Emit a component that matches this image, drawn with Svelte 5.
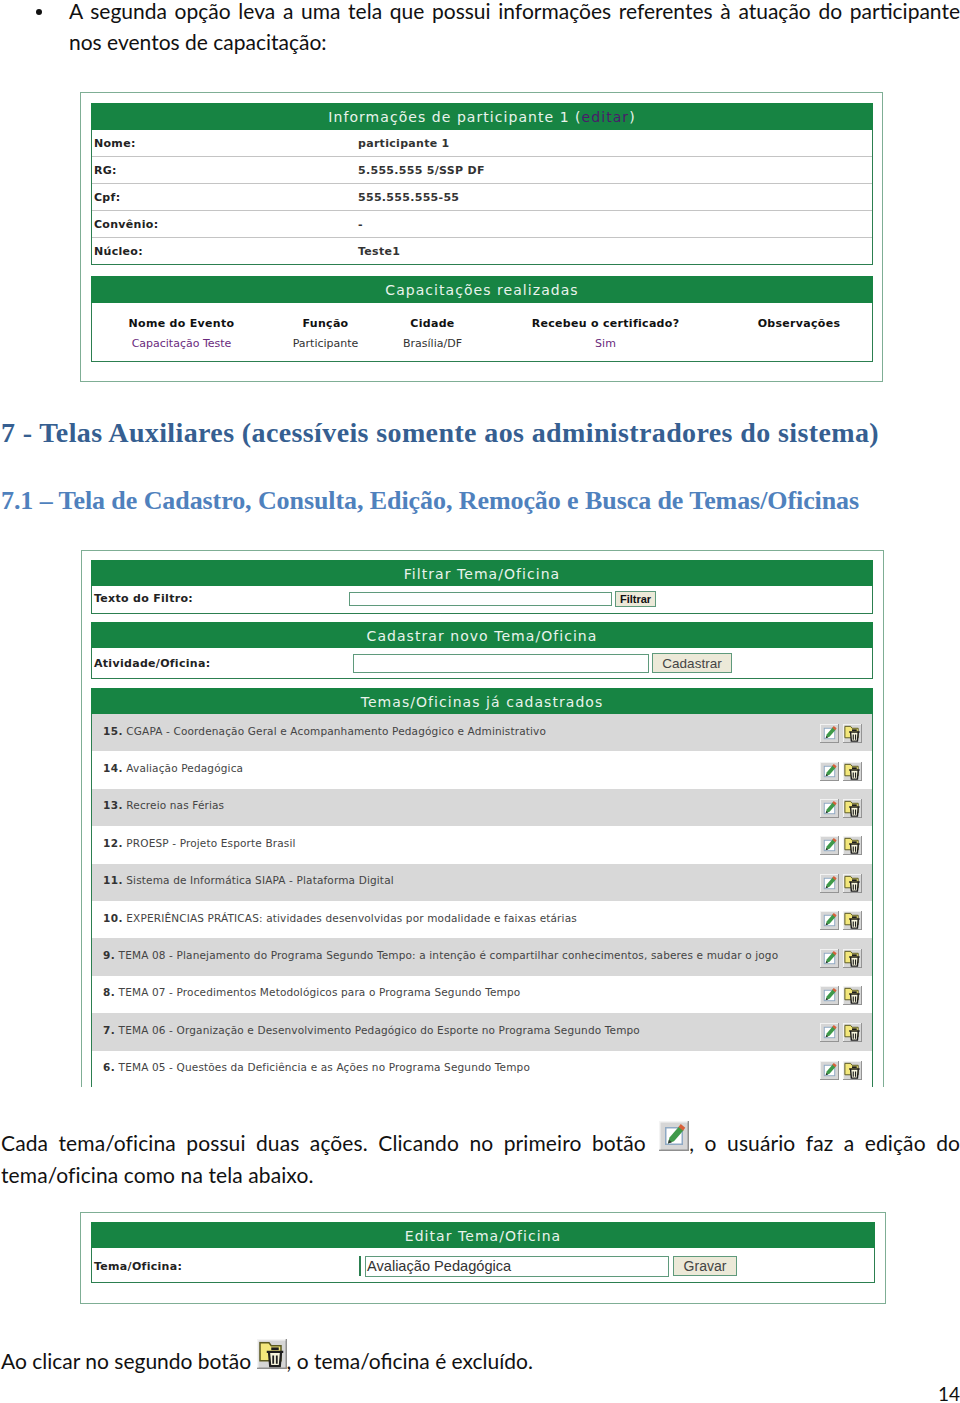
<script lang="ts">
const info = [
  ['Nome:', 'participante 1', true],
  ['RG:', '5.555.555 5/SSP DF', false],
  ['Cpf:', '555.555.555-55', false],
  ['Convênio:', '-', false],
  ['Núcleo:', 'Teste1', false]
];

const temas = [
  ['15.', 'CGAPA - Coordenação Geral e Acompanhamento Pedagógico e Administrativo'],
  ['14.', 'Avaliação Pedagógica'],
  ['13.', 'Recreio nas Férias'],
  ['12.', 'PROESP - Projeto Esporte Brasil'],
  ['11.', 'Sistema de Informática SIAPA - Plataforma Digital'],
  ['10.', 'EXPERIÊNCIAS PRÁTICAS: atividades desenvolvidas por modalidade e faixas etárias'],
  ['9.', 'TEMA 08 - Planejamento do Programa Segundo Tempo: a intenção é compartilhar conhecimentos, saberes e mudar o jogo'],
  ['8.', 'TEMA 07 - Procedimentos Metodológicos para o Programa Segundo Tempo'],
  ['7.', 'TEMA 06 - Organização e Desenvolvimento Pedagógico do Esporte no Programa Segundo Tempo'],
  ['6.', 'TEMA 05 - Questões da Deficiência e as Ações no Programa Segundo Tempo']
];
</script>

{#snippet editIcon()}
  <svg class="icon" viewBox="0 0 20 20">
    <rect width="20" height="20" fill="#d6d6d6" />
    <path d="M0 19.5H20M19.5 0V20" stroke="#8f8f8f" />
    <path d="M0 .5H19M.5 0V19" stroke="#f4f4f4" />
    <rect x="4.500" y="4.500" width="11" height="11" fill="#fff" stroke="#8fa9c4" />
    <path d="M6 15l1-4 6.500-7.500 3 2.500-6.500 7.500z" fill="#3f9a4a" />
    <path d="M13 4l1.500-2 3 2.500-1.500 2z" fill="#d8603a" />
    <path d="M6 15l.6-2.500 2 1.700z" fill="#333" />
  </svg>
{/snippet}

{#snippet trashIcon()}
  <svg class="icon" viewBox="0 0 20 20">
    <rect width="20" height="20" fill="#d6d6d6" />
    <path d="M0 19.500H20M19.500 0V20" stroke="#8f8f8f" />
    <path d="M0 .5H19M.5 0V19" stroke="#f4f4f4" />
    <path d="M2 14.500V2.500h6l1.500 2H16v10z" fill="#f3e77c" stroke="#5c5a20" />
    <path d="M6.500 8.500h11M8 9l.8 9h6.400l.8-9" fill="#f7f5dc" stroke="#1e1e1e" stroke-width="1.500" />
    <path d="M9.500 6.500h5" stroke="#1e1e1e" stroke-width="1.800" />
    <path d="M10.800 11v5.500M13.200 11v5.500" stroke="#1e1e1e" stroke-width="1.200" />
  </svg>
{/snippet}

<div class="page">
  <ul class="bullets">
    <li><span class="dot"></span><span>A segunda opção leva a uma tela que possui informações referentes à atuação do participante nos eventos de capacitação:</span></li>
  </ul>

  <section class="shot first">
    <div class="panel">
      <h3>Informações de participante 1 (<span class="edit">editar</span>)</h3>
      {#each info as [label, value, strong]}
        <div class="info-row">
          <span class="label">{label}</span>
          <span class="value" class:strong>{value}</span>
        </div>
      {/each}
    </div>
    <div class="panel done">
      <h3>Capacitações realizadas</h3>
      <div class="done-grid">
        <b>Nome do Evento</b><b>Função</b><b>Cidade</b><b>Recebeu o certificado?</b><b>Observações</b>
        <span class="purple">Capacitação Teste</span><span>Participante</span><span>Brasília/DF</span><span class="purple">Sim</span><span></span>
      </div>
    </div>
  </section>

  <h1>7 - Telas Auxiliares (acessíveis somente aos administradores do sistema)</h1>
  <h2>7.1 – Tela de Cadastro, Consulta, Edição, Remoção e Busca de Temas/Oficinas</h2>

  <section class="shot second">
    <div class="panel">
      <h3 class="low">Filtrar Tema/Oficina</h3>
      <div class="form-row filter">
        <span class="label">Texto do Filtro:</span>
        <span class="input"></span>
        <span class="btn small">Filtrar</span>
      </div>
    </div>
    <div class="panel gap-a">
      <h3 class="low">Cadastrar novo Tema/Oficina</h3>
      <div class="form-row create">
        <span class="label">Atividade/Oficina:</span>
        <span class="input"></span>
        <span class="btn">Cadastrar</span>
      </div>
    </div>
    <div class="panel gap-b list">
      <h3 class="low">Temas/Oficinas já cadastrados</h3>
      {#each temas as [num, name], i}
        <div class="tema" class:odd={i % 2 === 0}>
          <span class="tema-name"><b>{num}</b> {name}</span>
          <span class="actions">{@render editIcon()}{@render trashIcon()}</span>
        </div>
      {/each}
    </div>
  </section>

  <p class="body-text one">Cada tema/oficina possui duas ações. Clicando no primeiro botão <span class="inline-icon">{@render editIcon()}</span>, o usuário faz a edição do tema/oficina como na tela abaixo.</p>

  <section class="shot third">
    <div class="panel">
      <h3 class="low">Editar Tema/Oficina</h3>
      <div class="form-row editar">
        <span class="label">Tema/Oficina:</span>
        <span class="tick"></span>
        <span class="input filled">Avaliação Pedagógica</span>
        <span class="btn">Gravar</span>
      </div>
    </div>
  </section>

  <p class="body-text two">Ao clicar no segundo botão <span class="inline-icon tight">{@render trashIcon()}</span>, o tema/oficina é excluído.</p>
  <div class="page-num">14</div>
</div>

<style>
:global(body) {
  margin: 0;
  background: #fff;
}

.page {
  width: 960px;
  height: 1403px;
  overflow: hidden;
  padding-left: 1px;
  box-sizing: border-box;
  font-family: Lato, "Open Sans", sans-serif;
  color: #111;
}

.bullets {
  margin: -5px 0 0;
  padding: 0 0 0 35px;
  font-size: 21px;
  line-height: 31px;
  text-align: justify;
  list-style: none;
}

.bullets li {
  display: flex;
}

.dot {
  flex: none;
  width: 6px;
  height: 6px;
  margin: 14px 27px 0 0;
  border-radius: 50%;
  background: #111;
}

.shot {
  border: 1px solid #7fae95;
  box-sizing: border-box;
  font-family: "DejaVu Sans", sans-serif;
  background: #fff;
}

.first {
  width: 803px;
  height: 290px;
  margin: 35px 0 0 79px;
  padding: 10px 9px 0 10px;
}

.second {
  width: 803px;
  height: 537px;
  margin: 0 0 0 80px;
  padding: 9px 10px 0 9px;
  border-bottom: 0;
  overflow: hidden;
}

.third {
  width: 806px;
  height: 92px;
  margin: 21px 0 0 79px;
  padding: 9px 10px 0 10px;
}

.panel {
  border: 1px solid #2c7f50;
  border-top: 0;
  box-sizing: border-box;
}

.done {
  margin-top: 11px;
  height: 86px;
}

.gap-a {
  margin-top: 8px;
}

.gap-b {
  margin-top: 9px;
}

.list {
  border-bottom: 0;
}

h3 {
  margin: 0 -1px;
  height: 27px;
  background: #178443;
  color: #e9f3ec;
  font-size: 14px;
  font-weight: 400;
  line-height: 29px;
  letter-spacing: 1.05px;
  text-align: center;
}

h3.low {
  height: 26px;
  line-height: 28px;
}

.edit {
  color: #4a1a6a;
}

.info-row {
  display: grid;
  grid-template-columns: 264px 1fr;
  height: 27px;
  padding-left: 2px;
  align-items: center;
  border-bottom: 1px solid #c4c4c4;
  box-sizing: border-box;
  font-size: 11px;
  font-weight: 700;
  letter-spacing: 0.3px;
  color: #222;
}

.info-row:last-child {
  border-bottom: 0;
  height: 26px;
}

.value {
  font-weight: 700;
  color: #333;
}

.done-grid {
  display: grid;
  grid-template-columns: 179px 109px 105px 241px 1fr;
  grid-template-rows: 20px 20px;
  padding-top: 10px;
  font-size: 11px;
  text-align: center;
  align-items: center;
  color: #333;
}

.done-grid b {
  color: #111;
  letter-spacing: 0.3px;
}

.purple {
  color: #6a2a7d;
}

.form-row {
  display: flex;
  align-items: center;
  padding-left: 2px;
  font-size: 11px;
}

.form-row .label {
  font-weight: 700;
  letter-spacing: 0.3px;
  color: #222;
}

.filter {
  height: 27px;
  padding-bottom: 2px;
  box-sizing: border-box;
}

.filter .label {
  width: 255px;
}

.filter .input {
  width: 261px;
  height: 12px;
}

.filter .btn {
  margin-left: 3px;
}

.create {
  height: 30px;
}

.create .label {
  width: 259px;
}

.create .input {
  width: 294px;
  height: 17px;
}

.create .btn {
  margin-left: 3px;
  width: 78px;
  height: 18px;
}

.editar {
  height: 34px;
  padding-top: 2px;
  box-sizing: border-box;
}

.editar .label {
  width: 265px;
}

.tick {
  width: 2px;
  height: 20px;
  margin-right: 4px;
  background: #2c7f50;
}

.editar .input {
  width: 301px;
  height: 19px;
}

.editar .btn {
  margin-left: 4px;
  width: 62px;
  height: 18px;
  font-size: 14px;
}

.input {
  display: block;
  border: 1px solid #5f9a7c;
  background: #fff;
  box-sizing: content-box;
}

.filled {
  font-family: "Liberation Sans", sans-serif;
  font-size: 14.6px;
  line-height: 19px;
  color: #333;
  padding-left: 1px;
}

.btn {
  display: flex;
  align-items: center;
  justify-content: center;
  border: 1px solid #5f9a7c;
  background: #ece9d8;
  box-sizing: content-box;
  font-family: "Liberation Sans", sans-serif;
  font-size: 13.5px;
  color: #444;
}

.btn.small {
  width: 39px;
  height: 14px;
  font-size: 11px;
  font-weight: 700;
  color: #111;
}

.tema {
  display: flex;
  align-items: center;
  justify-content: space-between;
  height: 37.4px;
  padding: 0 10px 0 11px;
  box-sizing: border-box;
  font-size: 10.500px;
  letter-spacing: 0.15px;
  color: #444;
}

.tema.odd {
  background: #d8d8d8;
}

.tema-name {
  margin-top: -4px;
}

.tema-name b {
  color: #333;
  letter-spacing: 0.4px;
}

.actions {
  display: flex;
  gap: 4px;
  margin-top: 2px;
}

.icon {
  display: block;
  width: 19px;
  height: 19px;
}

h1, h2 {
  margin: 0;
  font-family: "Liberation Serif", serif;
  font-weight: 700;
  white-space: nowrap;
}

h1 {
  margin-top: 36px;
  font-size: 28px;
  line-height: 30px;
  letter-spacing: 0.38px;
  color: #365f91;
}

h2 {
  margin-top: 38px;
  font-size: 26px;
  line-height: 30px;
  letter-spacing: -0.08px;
  margin-bottom: 34px;
  color: #4f81bd;
}

.body-text {
  margin: 0;
  font-size: 21px;
  line-height: 32px;
  text-align: justify;
}

.one {
  margin-top: 40px;
  letter-spacing: 0.1px;
}

.two {
  margin-top: 41px;
}

.inline-icon {
  display: inline-block;
  width: 30px;
  height: 30px;
  margin: -10px 0 0 3px;
  vertical-align: 0;
}

.inline-icon.tight {
  margin-left: 0;
}

.inline-icon :global(.icon) {
  width: 30px;
  height: 30px;
}

.page-num {
  text-align: right;
  font-size: 19px;
  line-height: 18px;
  margin-top: 8px;
}
</style>
